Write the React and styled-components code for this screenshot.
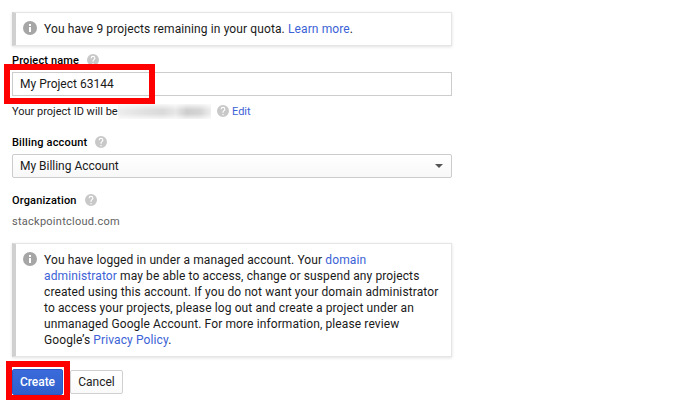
import React from "react";
import styled, { createGlobalStyle } from "styled-components";

const Global = createGlobalStyle`
  * { box-sizing: border-box; }
  body {
    margin: 0;
    background: #fff;
    color: #1a1a1a;
    font: 12px/16px Roboto, "Liberation Sans", sans-serif;
    overflow: hidden;
  }
`;

const Form = styled.main`
  display: flex;
  flex-direction: column;
  width: 452px;
  height: 400px;
  padding: 12px 0 0 12px;
`;

const Notice = styled.section`
  display: flex;
  gap: 7px;
  height: ${(p) => p.$height}px;
  padding: 8px 0 0 7px;
  border: 1px solid #e5e5e5;
  border-left: 4px solid #d0d0d0;
  box-shadow: 0 1px 3px rgba(0, 0, 0, 0.12);
  white-space: nowrap;
`;

const Line = styled.div`
  height: 16px;
  letter-spacing: 0.112px;
`;

const Link = styled.a`
  color: #3b62d6;
`;

const Label = styled.div`
  display: flex;
  align-items: center;
  gap: 8px;
  height: 16px;
  margin-top: ${(p) => p.$top}px;
  color: #000;
  font-size: 11px;
  font-weight: 500;
  letter-spacing: ${(p) => p.$spacing}px;
`;

const LabelText = styled.span`
  padding-top: 2px;
`;

const Field = styled.div`
  position: relative;
  margin-top: 4px;
`;

const TextInput = styled.div`
  height: 24px;
  padding: 3px 7px;
  border: 1px solid #ccc;
`;

const Select = styled.div`
  display: flex;
  align-items: center;
  justify-content: space-between;
  height: 24px;
  margin: 4px 0 1px;
  padding: 0 8px 0 7px;
  border: 1px solid #ccc;
  border-radius: 2px;
  background: linear-gradient(#fff, #f8f8f8);
  letter-spacing: -0.02px;
`;

const Highlight = styled.div`
  position: absolute;
  top: ${(p) => p.$top}px;
  left: ${(p) => p.$left}px;
  width: ${(p) => p.$width}px;
  height: ${(p) => p.$height}px;
  border: 6px solid #f00;
  pointer-events: none;
`;

const ProjectId = styled.div`
  display: flex;
  align-items: center;
  height: 16px;
  margin-top: 7px;
  font-size: 11px;
`;

const IdPrefix = styled.span`
  width: 106px;
  padding-top: 1px;
  white-space: nowrap;
`;

const Redacted = styled.span`
  width: 93px;
  height: 15px;
  margin-right: 6px;
  background: linear-gradient(90deg, #eee, #e2e2e2 25%, #dadada 48%, #e7e7e7 62%, #cecece 74%, #d4d4d4 88%, #eee);
  -webkit-mask-image: linear-gradient(rgba(0, 0, 0, 0.2), #000 40%, #000 65%, rgba(0, 0, 0, 0.25));
  mask-image: linear-gradient(rgba(0, 0, 0, 0.2), #000 40%, #000 65%, rgba(0, 0, 0, 0.25));
`;

const EditLink = styled(Link)`
  margin-left: 3px;
  padding-top: 1px;
`;

const Organization = styled.div`
  height: 16px;
  margin: 6px 0 13px;
  color: #616161;
  font-size: 11px;
  letter-spacing: 0.26px;
`;

const Actions = styled.div`
  position: relative;
  display: flex;
  align-items: center;
  gap: 7px;
  height: 26px;
  margin-top: 12px;
`;

const CreateButton = styled.button`
  width: 51px;
  height: 26px;
  padding: 0;
  border: 1px solid #2a56c6;
  border-radius: 2px;
  background: linear-gradient(#3b6bdb, #2f60cb);
  color: #fff;
  font: 500 12px/16px Roboto, sans-serif;
  letter-spacing: -0.05px;
`;

const CancelButton = styled.button`
  width: 53px;
  height: 24px;
  padding: 0;
  border: 1px solid #d0d0d0;
  border-radius: 2px;
  background: linear-gradient(#fff, #fafafa);
  color: #212121;
  font: 12px/16px Roboto, sans-serif;
`;

const Icon = styled.svg`
  display: block;
  flex: none;
`;

const InfoIcon = () => (
  <Icon width="14" height="14" viewBox="0 0 14 14">
    <circle cx="7" cy="7" r="7" fill="#a6a6a6" />
    <path d="M6 3h2v2H6zM6 6h2v5H6z" fill="#fff" />
  </Icon>
);

const HelpIcon = () => (
  <Icon width="12" height="12" viewBox="2 2 20 20">
    <path
      fill="#c8c8c8"
      d="M12 2a10 10 0 100 20 10 10 0 000-20zm1 17h-2v-2h2v2zm2.07-7.75l-.9.92C13.45 12.9 13 13.5 13 15h-2v-.5c0-1.1.45-2.1 1.17-2.83l1.24-1.26A2 2 0 1010 9H8a4 4 0 118 0c0 .88-.36 1.68-.93 2.25z"
    />
  </Icon>
);

export default function App() {
  return (
    <>
      <Global />
      <Form>
        <Notice $height={34}>
          <InfoIcon />
          <Line>You have 9 projects remaining in your quota. <Link>Learn more</Link>.</Line>
        </Notice>

        <Label $top={6} $spacing={0.15}><LabelText>Project name</LabelText><HelpIcon /></Label>
        <Field>
          <TextInput>My Project 63144</TextInput>
          <Highlight $top={-8} $left={-8} $width={151} $height={40} />
        </Field>
        <ProjectId>
          <IdPrefix>Your project ID will be</IdPrefix>
          <Redacted />
          <HelpIcon />
          <EditLink>Edit</EditLink>
        </ProjectId>

        <Label $top={15} $spacing={0.17}><LabelText>Billing account</LabelText><HelpIcon /></Label>
        <Select>
          My Billing Account
          <Icon width="8" height="4" viewBox="0 0 8 4"><path d="M0 0h8L4 4z" fill="#555" /></Icon>
        </Select>

        <Label $top={13} $spacing={0.15}><LabelText>Organization</LabelText><HelpIcon /></Label>
        <Organization>stackpointcloud.com</Organization>

        <Notice $height={114}>
          <InfoIcon />
          <div>
            <Line>You have logged in under a managed account. Your <Link>domain</Link></Line>
            <Line><Link>administrator</Link> may be able to access, change or suspend any projects</Line>
            <Line>created using this account. If you do not want your domain administrator</Line>
            <Line>to access your projects, please log out and create a project under an</Line>
            <Line>unmanaged Google Account. For more information, please review</Line>
            <Line>Google’s <Link>Privacy Policy</Link>.</Line>
          </div>
        </Notice>

        <Actions>
          <CreateButton>Create</CreateButton>
          <CancelButton>Cancel</CancelButton>
          <Highlight $top={-8} $left={-6} $width={64} $height={40} />
        </Actions>
      </Form>
    </>
  );
}
